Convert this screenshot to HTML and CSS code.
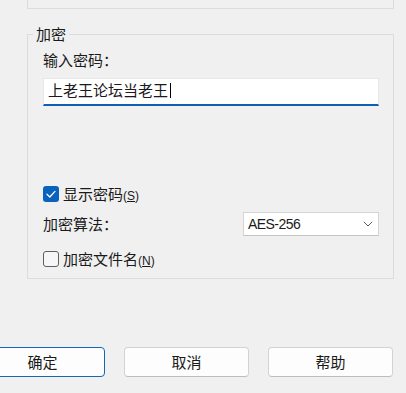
FILE: index.html
```html
<!DOCTYPE html>
<html lang="zh-CN">
<head>
<meta charset="utf-8">
<title>加密</title>
<link rel="stylesheet" href="styles.css">
</head>
<body>
<div class="page">
  <div class="top-box"></div>
  <fieldset class="group">
    <legend class="group-title">加密</legend>
    <div class="group-body">
      <div class="label">输入密码：</div>
      <div class="input"><span class="input-text">上老王论坛当老王</span><span class="caret"></span></div>
      <div class="check-row first-check">
        <span class="box checked"><svg width="16" height="16" viewBox="0 0 16 16"><polyline points="4,8.3 6.8,11 12,5.4" fill="none" stroke="#fff" stroke-width="1.3" stroke-linecap="round" stroke-linejoin="round"/></svg></span>
        <span class="check-label">显示密码<span class="key">(<u>S</u>)</span></span>
      </div>
      <div class="combo-row">
        <span class="label-inline">加密算法：</span>
        <div class="combo">
          <span class="combo-text">AES-256</span>
          <svg class="chev" width="10" height="6" viewBox="0 0 10 6"><polyline points="0.8,0.8 5,5 9.2,0.8" fill="none" stroke="#5a5a5a" stroke-width="1"/></svg>
        </div>
      </div>
      <div class="check-row second-check">
        <span class="box"></span>
        <span class="check-label">加密文件名<span class="key">(<u>N</u>)</span></span>
      </div>
    </div>
  </fieldset>
  <div class="buttons">
    <button class="btn default">确定</button>
    <button class="btn">取消</button>
    <button class="btn">帮助</button>
  </div>
</div>
</body>
</html>
```
FILE: styles.css
```css
html, body {
  margin: 0;
  padding: 0;
  background: #f0f0f0;
}
body {
  width: 406px;
  height: 393px;
  overflow: hidden;
  font-family: "Noto Sans CJK SC", "Noto Sans", sans-serif;
  font-size: 15px;
  color: #1a1a1a;
}
.page {
  width: 406px;
  height: 393px;
}
.top-box {
  margin-left: 27px;
  width: 367px;
  height: 8px;
  box-sizing: border-box;
  border: 1px solid #dcdcdc;
  border-top: none;
  height: 9px;
}
.group {
  margin: 15px 0 0 27px;
  width: 367px;
  box-sizing: border-box;
  border: 1px solid #dcdcdc;
  padding: 0;
  min-width: 0;
}
.group-title {
  margin-left: 5px;
  padding: 0 3px;
  line-height: 20px;
  height: 20px;
}
.group-body {
  padding: 6px 14px 9px 15px;
}
.label, .label-inline, .check-label {
  line-height: 20px;
  height: 20px;
}
.input {
  margin-top: 8px;
  height: 28px;
  box-sizing: border-box;
  background: #fff;
  border: 1px solid #e8e8e8;
  border-bottom: 2px solid #0f5fb3;
  padding: 0 0 3px 4px;
  display: flex;
  align-items: center;
  line-height: 20px;
}
.caret {
  display: inline-block;
  width: 1px;
  height: 15px;
  background: #000;
  margin-left: 2px;
}
.check-row {
  display: flex;
  align-items: center;
  height: 20px;
}
.first-check {
  margin-top: 78px;
}
.second-check {
  margin-top: 13px;
}
.box {
  width: 16px;
  height: 16px;
  box-sizing: border-box;
  border: 1px solid #5f5f5f;
  border-radius: 3px;
  background: #f6f6f6;
  margin-right: 4px;
  display: flex;
}
.box.checked {
  border: none;
  background: #0a62bd;
}
.key {
  font-family: "Liberation Sans", Arial, sans-serif;
  font-size: 12px;
}
.combo-row {
  margin-top: 8px;
  display: flex;
  align-items: center;
  justify-content: space-between;
  height: 24px;
}
.combo {
  width: 136px;
  height: 24px;
  box-sizing: border-box;
  background: #fff;
  border: 1px solid #d4d4d4;
  border-bottom-color: #c4c4c4;
  display: flex;
  align-items: center;
  justify-content: space-between;
  padding: 0 5px 0 4px;
}
.combo-text {
  font-family: "Liberation Sans", Arial, sans-serif;
  font-size: 14px;
  letter-spacing: -0.55px;
}
.chev {
  margin-right: 0;
}
.buttons {
  display: flex;
  gap: 19px;
  margin: 68px 0 0 -20px;
}
.btn {
  width: 125px;
  height: 30px;
  box-sizing: border-box;
  background: #fdfdfd;
  border: 1px solid #d3d3d3;
  border-bottom-color: #bdbdbd;
  border-radius: 4px;
  font-family: "Noto Sans CJK SC", "Noto Sans", sans-serif;
  font-size: 15px;
  color: #1a1a1a;
  padding: 0;
  line-height: 20px;
}
.btn.default {
  border: 1px solid #1466b8;
}
```
